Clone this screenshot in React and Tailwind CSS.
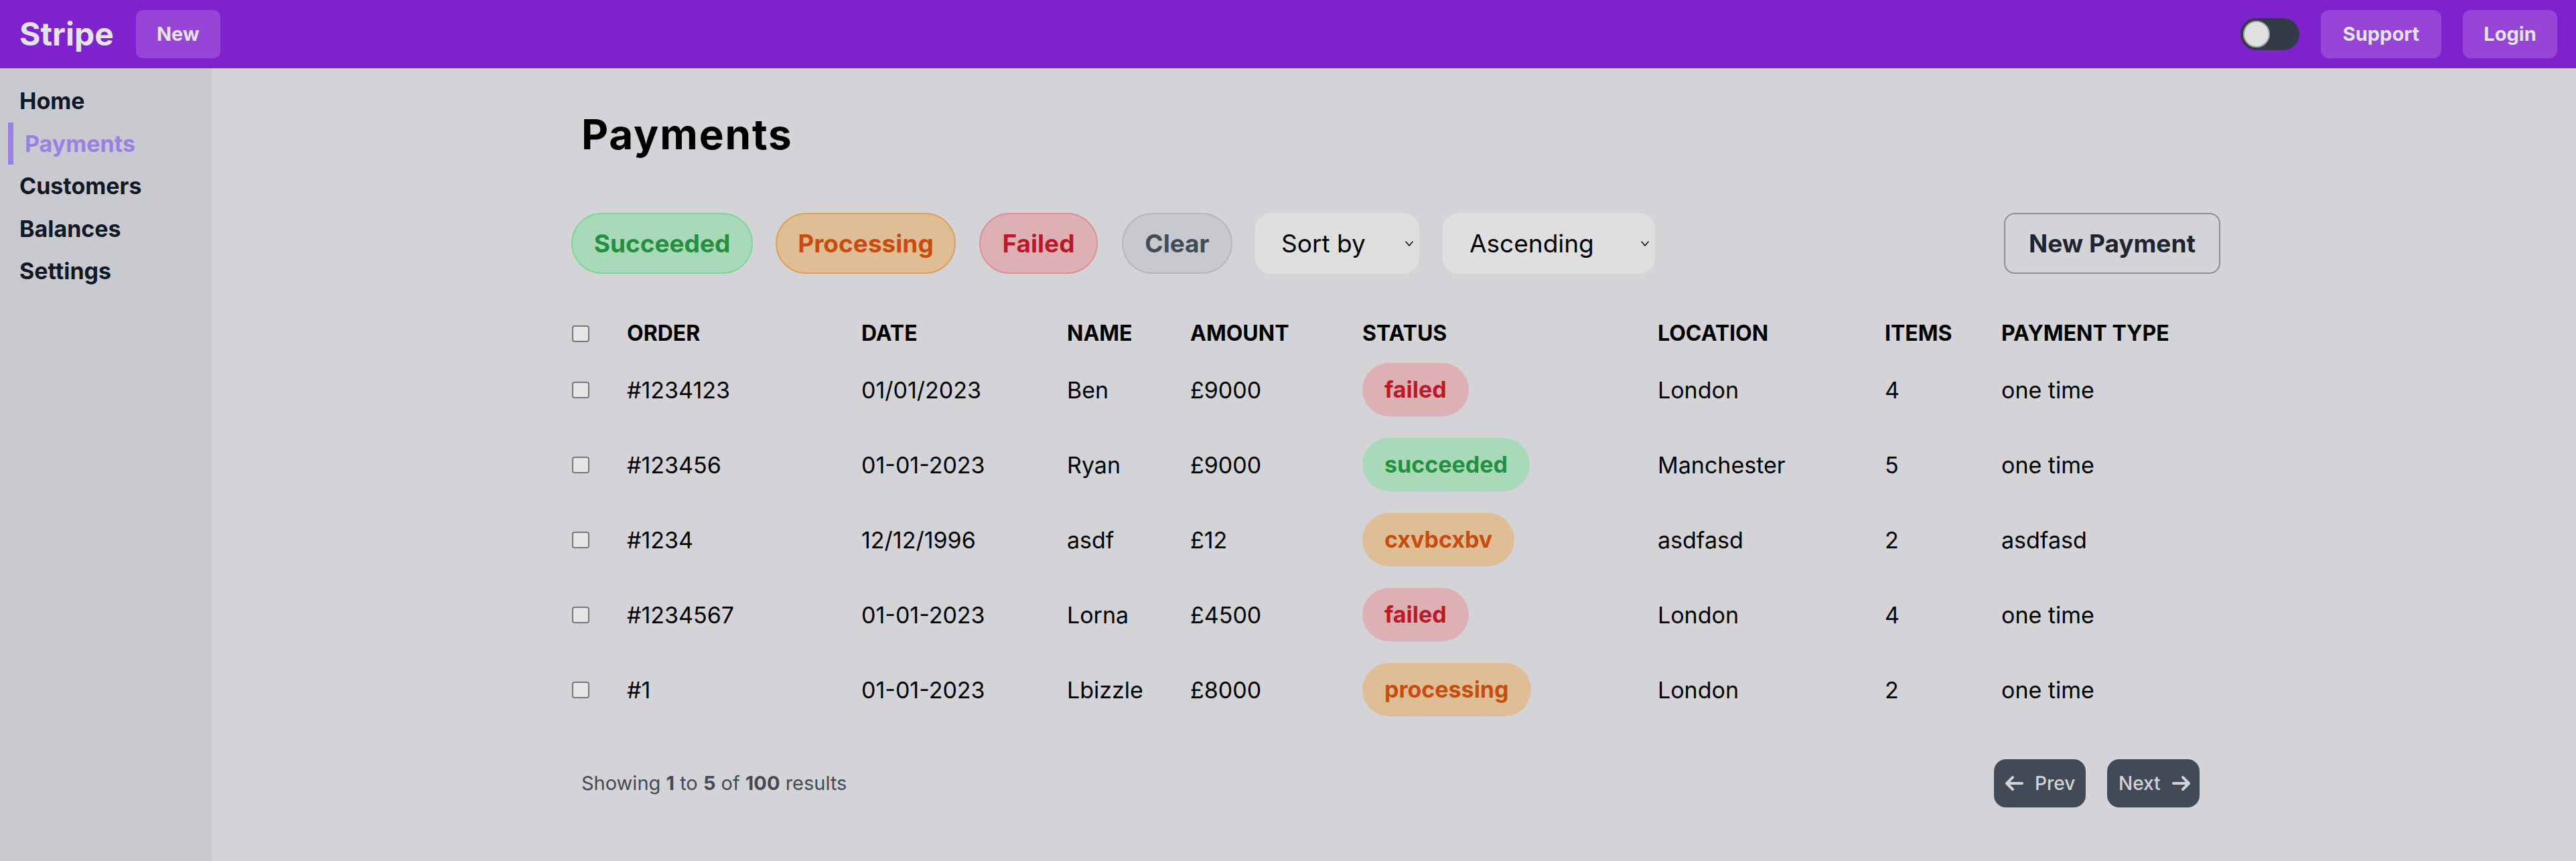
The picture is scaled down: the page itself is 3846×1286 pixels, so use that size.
import React from "react";

const rows = [
  { order: "#1234123", date: "01/01/2023", name: "Ben", amount: "£9000", status: "failed", location: "London", items: "4", type: "one time" },
  { order: "#123456", date: "01-01-2023", name: "Ryan", amount: "£9000", status: "succeeded", location: "Manchester", items: "5", type: "one time" },
  { order: "#1234", date: "12/12/1996", name: "asdf", amount: "£12", status: "cxvbcxbv", location: "asdfasd", items: "2", type: "asdfasd" },
  { order: "#1234567", date: "01-01-2023", name: "Lorna", amount: "£4500", status: "failed", location: "London", items: "4", type: "one time" },
  { order: "#1", date: "01-01-2023", name: "Lbizzle", amount: "£8000", status: "processing", location: "London", items: "2", type: "one time" },
];

function Badge({ status }) {
  let cls = "bg-[#dfbd95] text-[#c94c0c]";
  if (status === "failed") cls = "bg-[#ddb1b3] text-[#bd1729]";
  if (status === "succeeded") cls = "bg-[#a8d9b8] text-[#22903d]";
  return (
    <span className={"inline-flex h-[80px] items-center rounded-full px-[33px] text-[34px] font-bold leading-none " + cls}>
      {status}
    </span>
  );
}

function Check() {
  return <span className="ml-px block h-[25px] w-[26px] rounded-[4px] border-2 border-[#767676] bg-[#e6e6e6]" />;
}

function Chevron() {
  return (
    <svg width="14" height="10" viewBox="0 0 14 10" className="shrink-0">
      <path d="M2 2l5 6 5-6" fill="none" stroke="#111" strokeWidth="1.6" strokeLinecap="round" strokeLinejoin="round" />
    </svg>
  );
}

const grid = "grid grid-cols-[83px_350px_307px_184px_257px_441px_339px_174px_1fr] items-center";

export default function App() {
  return (
    <div className="flex h-screen w-full flex-col overflow-hidden bg-[#d4d4d8] font-[Inter,sans-serif]">
      <header className="flex h-[102px] shrink-0 items-center bg-[#7e22ce] pl-[29px] pr-[28px]">
        <div className="text-[48px] font-bold leading-none text-[#e4e4e7]">Stripe</div>
        <button className="ml-[33px] h-[72px] w-[126px] rounded-[10px] bg-[#9645d6] text-[29px] font-bold text-[#e4e4e7]">
          New
        </button>
        <div className="ml-auto flex items-center">
          <div className="flex h-[48px] w-[88px] items-center rounded-full bg-[#343b48] pl-[4px]">
            <span className="block h-[40px] w-[40px] rounded-full border-2 border-[#a3a3a3] bg-[#e1e1e1]" />
          </div>
          <button className="ml-[32px] h-[72px] w-[180px] rounded-[12px] bg-[#9645d6] text-[29px] font-bold text-[#e4e4e7]">
            Support
          </button>
          <button className="ml-[32px] h-[72px] w-[141px] rounded-[12px] bg-[#9645d6] text-[29px] font-bold text-[#e4e4e7]">
            Login
          </button>
        </div>
      </header>

      <div className="flex min-h-0 flex-1">
        <aside className="w-[317px] shrink-0 bg-[#c9cacf] pt-[17px]">
          <nav className="flex flex-col text-[34px] font-bold leading-[63.5px] text-[#111827]">
            <a className="pl-[29px]">Home</a>
            <a className="ml-[12px] border-l-[8px] border-[#9b7fe1] pl-[17px] text-[#9b7fe1]">Payments</a>
            <a className="pl-[29px]">Customers</a>
            <a className="pl-[29px]">Balances</a>
            <a className="pl-[29px]">Settings</a>
          </nav>
        </aside>

        <main className="min-w-0 flex-1 pl-[5px]">
          <div className="mx-auto w-[2462px] pt-[68px]">
            <h1 className="pl-[15px] text-[62px] font-bold leading-none tracking-[0.03em] text-black">Payments</h1>

            <div className="mt-[86px] flex h-[91px] items-stretch">
              <button className="w-[271px] rounded-full border-2 border-[#80d597] bg-[#a8d9b8] text-[37px] font-bold text-[#22903d]">
                Succeeded
              </button>
              <button className="ml-[34px] w-[269px] rounded-full border-2 border-[#dca15c] bg-[#dfbd95] text-[37px] font-bold text-[#c94c0c]">
                Processing
              </button>
              <button className="ml-[35px] w-[177px] rounded-full border-2 border-[#df9096] bg-[#ddb1b3] text-[37px] font-bold text-[#bd1729]">
                Failed
              </button>
              <button className="ml-[36px] w-[165px] rounded-full border-2 border-[#b7b8be] bg-[#c8c9ce] text-[37px] font-bold text-[#434b57]">
                Clear
              </button>
              <div className="ml-[34px] flex w-[245px] items-center justify-between rounded-[24px] bg-[#dfdfe0] pl-[39px] pr-[8px] text-[37px] text-black">
                <span>Sort by</span>
                <Chevron />
              </div>
              <div className="ml-[35px] flex w-[317px] items-center justify-between rounded-[24px] bg-[#dfdfe0] pl-[40px] pr-[8px] text-[37px] text-black">
                <span>Ascending</span>
                <Chevron />
              </div>
              <button className="ml-auto w-[323px] rounded-[16px] border-2 border-[#8b8e98] text-[37px] font-bold text-[#1f2430]">
                New Payment
              </button>
            </div>

            <div className="mt-[61px]">
              <div className={grid + " h-[56px] text-[32px] font-bold uppercase text-black"}>
                <Check />
                <div>Order</div>
                <div>Date</div>
                <div>Name</div>
                <div>Amount</div>
                <div>Status</div>
                <div>Location</div>
                <div>Items</div>
                <div>Payment Type</div>
              </div>
              {rows.map((r, i) => (
                <div key={i} className={grid + " h-[112px] text-[34px] text-black"}>
                  <Check />
                  <div>{r.order}</div>
                  <div>{r.date}</div>
                  <div>{r.name}</div>
                  <div>{r.amount}</div>
                  <div>
                    <Badge status={r.status} />
                  </div>
                  <div>{r.location}</div>
                  <div>{r.items}</div>
                  <div>{r.type}</div>
                </div>
              ))}
            </div>

            <div className="mt-[48px] flex items-center justify-between pl-[15px] pr-[31px]">
              <p className="text-[29px] text-[#434a56]">
                Showing <span className="font-bold">1</span> to <span className="font-bold">5</span> of{" "}
                <span className="font-bold">100</span> results
              </p>
              <div className="flex gap-[32px]">
                <button className="flex h-[72px] w-[137px] items-center gap-[17px] rounded-[18px] bg-[#434a57] pl-[16px] text-[28px] font-medium text-[#d4d4d8]">
                  <svg width="28" height="24" viewBox="0 0 28 24">
                    <path d="M26 12H3M12 3l-9 9 9 9" fill="none" stroke="#d4d4d8" strokeWidth="4" strokeLinecap="round" strokeLinejoin="round" />
                  </svg>
                  Prev
                </button>
                <button className="flex h-[72px] w-[138px] items-center gap-[17px] rounded-[18px] bg-[#434a57] pl-[17px] text-[28px] font-medium text-[#d4d4d8]">
                  Next
                  <svg width="28" height="24" viewBox="0 0 28 24">
                    <path d="M2 12h23M16 3l9 9-9 9" fill="none" stroke="#d4d4d8" strokeWidth="4" strokeLinecap="round" strokeLinejoin="round" />
                  </svg>
                </button>
              </div>
            </div>
          </div>
        </main>
      </div>
    </div>
  );
}
